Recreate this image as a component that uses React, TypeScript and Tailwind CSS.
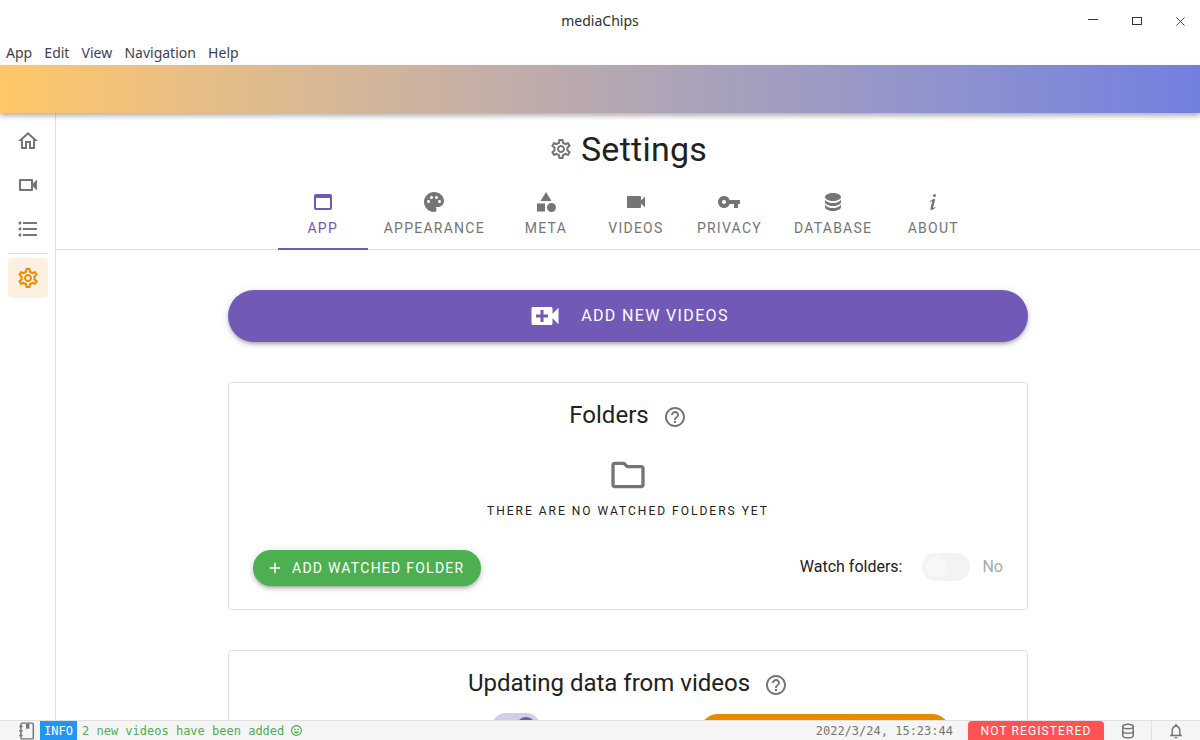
import React from 'react'
import {
  MdHelpOutline,
  MdOutlineFolder,
  MdOutlineHome,
  MdOutlineSettings,
  MdOutlineVideocam,
  MdFormatListBulleted,
  MdPalette,
  MdVideocam,
  MdVpnKey,
  MdWebAsset,
  MdAdd,
  MdVideoCall,
  MdOutlineSentimentVerySatisfied,
  MdOutlineNotifications,
} from 'react-icons/md'

const ShapesIcon = ({ className }: { className?: string }) => (
  <svg viewBox="0 0 24 24" fill="currentColor" className={className}>
    <path d="M11 13.5v8H3v-8h8zM12 2l5.5 9h-11L12 2zm5.5 11c2.5 0 4.5 2 4.5 4.5S20 22 17.5 22 13 20 13 17.5s2-4.5 4.5-4.5z" />
  </svg>
)

const DatabaseIcon = ({ className }: { className?: string }) => (
  <svg viewBox="0 0 24 24" fill="currentColor" className={className}>
    <path d="M12 3C7.58 3 4 4.79 4 7s3.58 4 8 4 8-1.79 8-4-3.58-4-8-4M4 9v3c0 2.21 3.58 4 8 4s8-1.79 8-4V9c0 2.21-3.58 4-8 4s-8-1.79-8-4m0 5v3c0 2.21 3.58 4 8 4s8-1.79 8-4v-3c0 2.21-3.58 4-8 4s-8-1.79-8-4z" />
  </svg>
)

const DatabaseOutlineIcon = ({ className }: { className?: string }) => (
  <svg viewBox="0 0 24 24" fill="none" stroke="currentColor" strokeWidth="2" className={className}>
    <ellipse cx="12" cy="6" rx="7" ry="3" />
    <path d="M5 6v12c0 1.66 3.13 3 7 3s7-1.34 7-3V6M5 12c0 1.66 3.13 3 7 3s7-1.34 7-3" />
  </svg>
)

const InfoVariantIcon = ({ className }: { className?: string }) => (
  <svg viewBox="0 0 24 24" fill="currentColor" className={className}>
    <path d="M13.5 4A1.5 1.5 0 0 0 12 5.5 1.5 1.5 0 0 0 13.5 7 1.5 1.5 0 0 0 15 5.5 1.5 1.5 0 0 0 13.5 4m-.36 4.77c-1.19.1-4.44 2.69-4.44 2.69-.2.15-.14.14.02.42.16.27.14.29.33.16.2-.13.53-.34 1.08-.68 2.12-1.36.34 1.78-.57 7.07-.36 2.62 2 1.27 2.61.87.6-.39 2.21-1.5 2.37-1.61.22-.15.06-.27-.11-.52-.12-.17-.24-.05-.24-.05-.65.43-1.84 1.33-2 .76-.19-.57 1.03-4.48 1.7-7.17.11-.64.41-2.04-.75-1.94z" />
  </svg>
)

const NotebookIcon = ({ className }: { className?: string }) => (
  <svg viewBox="0 0 16 16" fill="none" stroke="currentColor" strokeWidth="1.3" className={className}>
    <rect x="3.5" y="1" width="11" height="14" rx="1" />
    <path d="M8 1.5v5l1.5-1 1.5 1v-5" fill="currentColor" stroke="none" />
    <path d="M2 4h3M2 8h3M2 12h3" />
  </svg>
)

const tabs = [
  { label: 'APP', icon: MdWebAsset, size: 'w-6 h-6' },
  { label: 'APPEARANCE', icon: MdPalette, size: 'w-6 h-6' },
  { label: 'META', icon: ShapesIcon, size: 'w-6 h-6' },
  { label: 'VIDEOS', icon: MdVideocam, size: 'w-6 h-6' },
  { label: 'PRIVACY', icon: MdVpnKey, size: 'w-6 h-6' },
  { label: 'DATABASE', icon: DatabaseIcon, size: 'w-6 h-6' },
  { label: 'ABOUT', icon: InfoVariantIcon, size: 'w-6 h-6' },
]

const menu = ['App', 'Edit', 'View', 'Navigation', 'Help']

const TitleBar = () => (
  <div className="h-[42px] flex-none flex items-center justify-center relative font-['Noto_Sans',sans-serif] text-[14px] text-[#2e2e2e]">
    <span className="-mt-[2px]">mediaChips</span>
    <div className="absolute right-[15px] top-0 h-[42px] flex items-center gap-[34px] text-[#333]">
      <svg viewBox="0 0 10 10" className="w-[10px] h-[10px] -mt-[3px]" stroke="currentColor" strokeWidth="1">
        <path d="M0 4.5h10" />
      </svg>
      <svg viewBox="0 0 10 8" className="w-[10px] h-[8px]" fill="none" stroke="currentColor" strokeWidth="1">
        <rect x="0.5" y="0.5" width="9" height="7" />
      </svg>
      <svg viewBox="0 0 10 10" className="w-[9px] h-[9px]" stroke="currentColor" strokeWidth="1">
        <path d="M0.5 0.5l9 9M9.5 0.5l-9 9" />
      </svg>
    </div>
  </div>
)

const Sidebar = () => (
  <div className="w-[56px] flex-none border-r border-[#e0e0e0] flex flex-col items-center pt-[6px] text-[#757575]">
    <div className="h-11 flex items-center justify-center"><MdOutlineHome className="w-6 h-6" /></div>
    <div className="h-11 flex items-center justify-center"><MdOutlineVideocam className="w-6 h-6" /></div>
    <div className="h-11 flex items-center justify-center"><MdFormatListBulleted className="w-6 h-6" /></div>
    <div className="w-10 border-t border-[#e0e0e0] mt-[2px] mb-1" />
    <div className="w-10 h-10 rounded bg-[#fdf0e0] flex items-center justify-center text-[#f08c00]">
      <MdOutlineSettings className="w-6 h-6" />
    </div>
  </div>
)

const Tabs = () => (
  <div className="flex justify-center border-b border-[#e0e0e0] h-[62px] mt-[17px] flex-none">
    {tabs.map((tab, idx) => {
      const Icon = tab.icon
      return (
        <div
          key={tab.label}
          className={`min-w-[90px] px-4 h-[62px] flex flex-col items-center pt-[2px] text-[14px] tracking-[1.25px] ${
            idx === 0 ? 'text-[#7159b5] border-b-2 border-[#7159b5]' : 'text-[#757575]'
          }`}
        >
          <Icon className={tab.size} />
          <span className="mt-[4px] leading-5">{tab.label}</span>
        </div>
      )
    })}
  </div>
)

const FoldersCard = () => (
  <div className="border border-[#e0e0e0] rounded h-[228px] flex flex-col items-center relative">
    <div className="mt-[16px] flex items-center h-8 text-[24px] text-[#212121]">
      Folders
      <MdHelpOutline className="w-6 h-6 ml-[14px] mt-[3px] text-[#757575]" />
    </div>
    <MdOutlineFolder className="w-10 h-10 text-[#757575] mt-[24px]" />
    <div className="mt-[6px] text-[12px] tracking-[2px] text-[#212121] leading-5">THERE ARE NO WATCHED FOLDERS YET</div>
    <div className="mt-[29px] w-full flex items-center justify-between pl-6 pr-6">
      <div className="h-9 w-[228px] rounded-full bg-[#4caf50] text-white text-[14px] tracking-[1.25px] flex items-center pl-[13px] shadow-[0_3px_3px_-2px_rgba(0,0,0,0.2),0_3px_4px_0_rgba(0,0,0,0.14),0_1px_8px_0_rgba(0,0,0,0.12)]">
        <MdAdd className="w-[18px] h-[18px] mr-[8px]" />
        ADD WATCHED FOLDER
      </div>
      <div className="flex items-center text-[16px] -mt-[2px]">
        <span className="text-[#212121] mr-5">Watch folders:</span>
        <div className="w-12 h-7 rounded-full bg-[#f3f3f3] flex items-center pl-[4px]">
          <div className="w-5 h-5 rounded-full bg-[#f8f8f8]" />
        </div>
        <span className="text-[#a8a8a8] ml-[12px]">No</span>
      </div>
    </div>
  </div>
)

const UpdatingCard = () => (
  <div className="border border-[#e0e0e0] rounded h-[228px] mt-[40px] flex flex-col items-center relative">
    <div className="mt-[16px] flex items-center h-8 text-[24px] text-[#212121]">
      Updating data from videos
      <MdHelpOutline className="w-6 h-6 ml-[14px] mt-[3px] text-[#757575]" />
    </div>
    <div className="w-full flex mt-[14px]">
      <div className="ml-[263px] w-12 h-7 rounded-full bg-[#d4cce9] flex items-center justify-end pr-[4px]">
        <div className="w-5 h-5 rounded-full bg-[#7159b5]" />
      </div>
      <div className="ml-[160px] w-[250px] h-9 mt-[1px] rounded-full bg-[#e68a00]" />
    </div>
  </div>
)

const StatusBar = () => (
  <div className="h-5 flex-none bg-[#f5f5f5] border-t border-[#e0e0e0] flex items-stretch font-['DejaVu_Sans_Mono',monospace] text-[12px] leading-[20px]">
    <div className="w-10 flex items-center justify-end pr-[5px] text-[#757575]">
      <NotebookIcon className="w-[18px] h-[18px]" />
    </div>
    <div className="w-[37px] bg-[#2196f3] text-white text-center">INFO</div>
    <div className="ml-[5px] text-[#4caf50] flex items-center">
      2 new videos have been added
      <MdOutlineSentimentVerySatisfied className="w-[13px] h-[13px] ml-[6px]" />
    </div>
    <div className="ml-auto text-[#757575]">2022/3/24, 15:23:44</div>
    <div className="ml-[15px] w-[136px] rounded-t bg-[#ff5252] text-white text-center font-['Roboto',sans-serif] tracking-[1.1px] leading-[21px]">
      NOT REGISTERED
    </div>
    <div className="w-[48px] flex items-center justify-center text-[#757575] border-r border-[#e0e0e0]">
      <DatabaseOutlineIcon className="w-[18px] h-[18px]" />
    </div>
    <div className="w-[48px] flex items-center justify-center text-[#757575]">
      <MdOutlineNotifications className="w-[18px] h-[18px]" />
    </div>
  </div>
)

export default function App() {
  return (
    <div className="w-[1200px] h-[740px] flex flex-col overflow-hidden bg-white font-['Roboto',sans-serif]">
      <TitleBar />
      <div className="h-[23px] flex-none flex items-center gap-[12.2px] px-[6px] font-['Noto_Sans',sans-serif] text-[14px] text-[#3b4252]">
        {menu.map((item) => (
          <span key={item} className="-mt-[2px]">{item}</span>
        ))}
      </div>
      <div className="h-12 flex-none relative z-10 bg-gradient-to-r from-[#ffc766] to-[#737fdf] shadow-[0_3px_5px_rgba(0,0,0,0.3)]" />
      <div className="flex-1 min-h-0 flex">
        <Sidebar />
        <div className="flex-1 min-w-0 flex flex-col overflow-hidden">
          <div className="flex-none mt-[14px] h-[44px] flex items-center justify-center text-[34px] tracking-[0.25px] text-[#212121]">
            <MdOutlineSettings className="w-6 h-6 mr-[8px] text-[#757575]" />
            Settings
          </div>
          <Tabs />
          <div className="w-[800px] mx-auto mt-[40px] flex-none">
            <div className="h-[52px] rounded-full bg-[#7159b5] text-white text-[16px] tracking-[1.35px] flex items-center justify-center shadow-[0_3px_3px_-2px_rgba(0,0,0,0.2),0_3px_4px_0_rgba(0,0,0,0.14),0_1px_8px_0_rgba(0,0,0,0.12)] mb-10">
              <MdVideoCall className="w-9 h-9 mr-[18px]" />
              ADD NEW VIDEOS
            </div>
            <FoldersCard />
            <UpdatingCard />
          </div>
        </div>
      </div>
      <StatusBar />
    </div>
  )
}
